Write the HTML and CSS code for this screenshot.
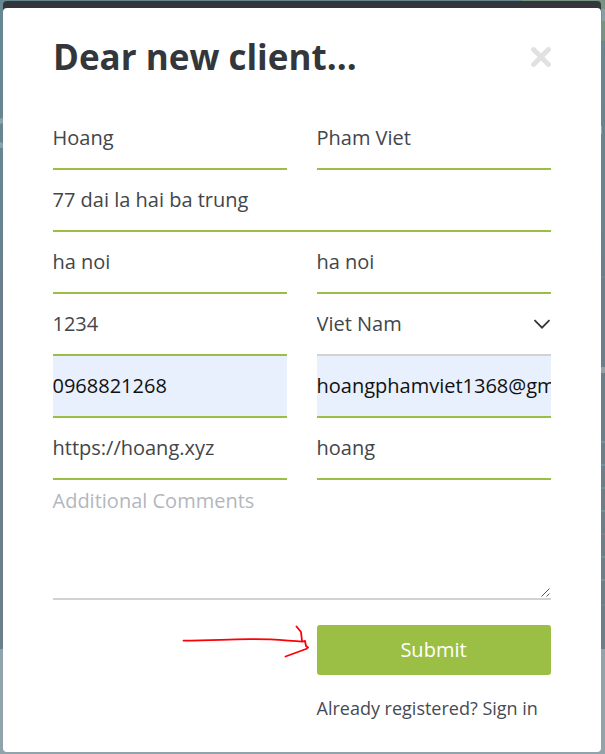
FILE: index.html
```html
<!DOCTYPE html>
<html lang="en">
<head>
<meta charset="utf-8">
<title>Dear new client...</title>
<link rel="stylesheet" href="styles.css">
</head>
<body>
<svg class="backdrop" width="605" height="754" viewBox="0 0 605 754" aria-hidden="true">
  <defs><linearGradient id="bg" x1="0" y1="0" x2="0" y2="1"><stop offset="0" stop-color="#678892"/><stop offset=".34" stop-color="#68858f"/><stop offset=".42" stop-color="#6a818d"/><stop offset="1" stop-color="#6a7f89"/></linearGradient></defs>
  <rect width="605" height="649" fill="url(#bg)"/>
  <rect y="649" width="605" height="105" fill="#91a4ac"/>
  <path d="M522 0h83v41h-83z" fill="#769482"/>
  <path d="M602 9h3v12h-3z" fill="#86a0a5"/>
  <path d="M601 126h1v8h-1z" fill="#91a7ad"/>
  <path d="M3 120.500C-3 121 -5 127 -5 133S-3 145 3 145.500" fill="none" stroke="#8ba3aa" stroke-width="5"/>
  <path d="M601 277h4M601 605h4" stroke="#6f929b"/>
  <path d="M601 367h4v6h-4z" fill="#91a3a9"/>
  <path d="M601 442h4M601 465h4" stroke="#6c95ac" stroke-width="2"/>
  <path d="M601 488h4M601 511h4M601 557h4M601 580h4" stroke="#6b9698" stroke-width="2"/>
  <path d="M601 534h4" stroke="#857f92" stroke-width="2"/>
</svg>
<div class="modal-cap"></div>
<main class="modal">
  <header class="heading">
    <h1>Dear new client...</h1>
    <button class="close" type="button" aria-label="Close">
      <svg width="20" height="20" viewBox="0 0 20 20"><path d="M2.6 2.6l14.800 14.800M17.400 2.600L2.600 17.400" fill="none" stroke="#e1e1e1" stroke-width="5" stroke-linecap="round"/></svg>
    </button>
  </header>
  <form class="form">
    <div class="field">Hoang</div>
    <div class="field">Pham Viet</div>
    <div class="field wide">77 dai la hai ba trung</div>
    <div class="field">ha noi</div>
    <div class="field">ha noi</div>
    <div class="field">1234</div>
    <div class="field select"><span>Viet Nam</span>
      <svg width="18" height="12" viewBox="0 0 18 12"><path d="M1.500 2.200L9 9.700l7.500-7.500" fill="none" stroke="#33373b" stroke-width="1.800"/></svg>
    </div>
    <div class="field filled">0968821268</div>
    <div class="field filled">hoangphamviet1368@gmail.com</div>
    <div class="field">https://hoang.xyz</div>
    <div class="field">hoang</div>
    <div class="comments wide"><span>Additional Comments</span>
      <svg class="grip" width="9" height="9" viewBox="0 0 9 9"><path d="M.5 8.500l8-8M5.500 8.500l3-3" stroke="#555" stroke-width="1"/></svg>
    </div>
    <div class="actions">
      <button class="submit" type="button">Submit</button>
      <p class="signin">Already registered? <a>Sign in</a></p>
    </div>
  </form>
</main>
<svg class="arrow" width="130" height="36" viewBox="180 624 130 36" aria-hidden="true">
  <path d="M183.500 640.600C214 640.500 230 639 252 639.200C276 639 288 641 302 641.600L305 641L306 646L308 647.500L306 649L285.500 656.500M296.500 626.500L301 632L302 641" fill="none" stroke="#fb0007" stroke-width="1.800" stroke-linecap="round" stroke-linejoin="round"/>
</svg>
</body>
</html>
```

FILE: styles.css
```css
* { box-sizing: border-box; }
body {
  display: flow-root;
  margin: 0;
  height: 754px;
  position: relative;
  overflow: hidden;
  font-family: "Open Sans", sans-serif;
  color: #33373b;
}
.backdrop { position: absolute; left: 0; top: 0; }
.modal-cap {
  position: absolute;
  left: 3px;
  top: 1px;
  width: 598px;
  height: 20px;
  border-radius: 4px;
  background: #33373b;
}
.modal {
  position: relative;
  width: 598px;
  height: 744px;
  margin: 8px 0 0 3px;
  padding: 0 50px;
  background: #fff;
  border-radius: 4px;
}
.heading {
  display: flex;
  align-items: flex-start;
  justify-content: space-between;
  height: 100px;
  padding-top: 25px;
}
h1 { margin: 0; font-size: 35px; line-height: 48px; font-weight: 700; }
.close {
  display: flex;
  height: 20px;
  margin-top: 14px;
  padding: 0;
  border: 0;
  background: none;
}
.form {
  display: grid;
  grid-template-columns: 234px 234px;
  column-gap: 30px;
}
.wide { grid-column: 1 / -1; }
.field {
  height: 62px;
  line-height: 60px;
  font-size: 20px;
  color: #42464a;
  text-indent: -0.5px;
  border-bottom: 2px solid #9bbf44;
  overflow: hidden;
  white-space: nowrap;
}
.select {
  display: flex;
  align-items: center;
  justify-content: space-between;
  border-color: #d2d2d2;
}
.filled { background: #e8effd; color: #111; }
.comments {
  display: flex;
  justify-content: space-between;
  height: 120px;
  padding-top: 7px;
  font-size: 20px;
  line-height: 28px;
  text-indent: -0.5px;
  color: #b3b7bd;
  border-bottom: 2px solid #d2d2d2;
}
.grip { align-self: flex-end; margin: 0 1px 1px 0; }
.actions { grid-column: 2; padding-top: 25px; }
.submit {
  display: block;
  width: 100%;
  height: 50px;
  padding: 0 1px 2px 0;
  border: 0;
  border-radius: 3px;
  background: #9bbf44;
  color: #fff;
  font: 20px "Open Sans", sans-serif;
}
.signin {
  margin: 20px 0 0;
  font-size: 18px;
  line-height: 26px;
  text-indent: -0.5px;
  color: #464a55;
  white-space: nowrap;
}
.arrow { position: absolute; left: 180px; top: 624px; }
```
